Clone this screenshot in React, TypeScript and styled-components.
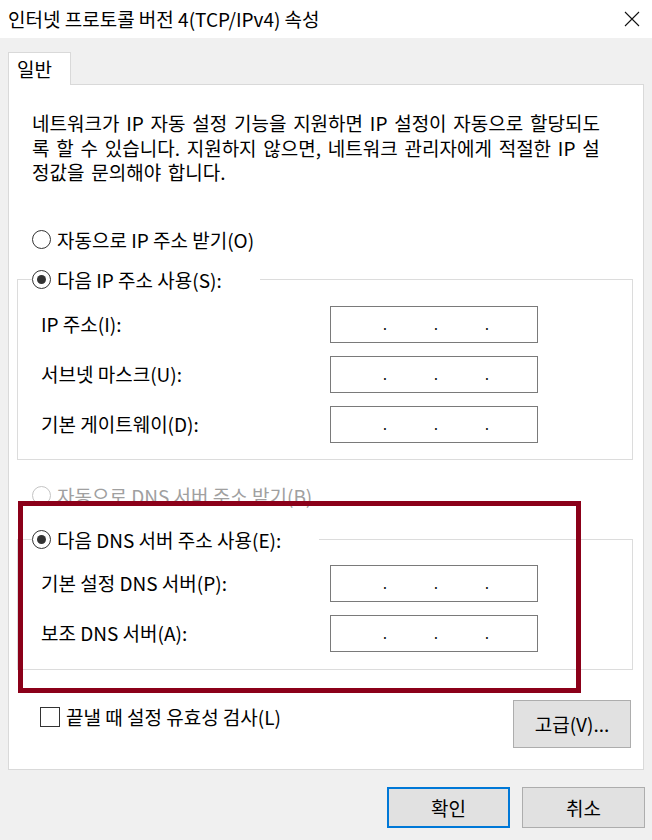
import styled, { createGlobalStyle } from "styled-components";

const GlobalStyle = createGlobalStyle`
  html, body {
    margin: 0;
    padding: 0;
    background: #f0f0f0;
  }
  body {
    font-family: "Noto Sans CJK KR", "Noto Sans", sans-serif;
    color: #000;
  }
`;

const Window = styled.div`
  width: 652px;
  height: 840px;
  background: #f0f0f0;
  display: flex;
  flex-direction: column;
  overflow: hidden;
  font-size: 19px;
`;

const TitleBar = styled.div`
  height: 38px;
  flex-shrink: 0;
  background: #fff;
  display: flex;
  align-items: center;
  justify-content: space-between;
  padding: 0 12px 0 8px;
  box-sizing: border-box;
`;

const Title = styled.span`
  font-size: 19px;
  line-height: 24px;
`;

const Body = styled.div`
  padding: 14px 8px 0 8px;
`;

const TabStrip = styled.div`
  display: flex;
`;

const Tab = styled.div`
  position: relative;
  z-index: 1;
  width: 63px;
  height: 33px;
  box-sizing: border-box;
  margin-bottom: -1px;
  padding: 4px 0 0 8px;
  background: #fff;
  border: 1px solid #d9d9d9;
  border-bottom: none;
  line-height: 24px;
`;

const Panel = styled.div`
  position: relative;
  background: #fff;
  border: 1px solid #d9d9d9;
  padding: 26px 0 21px 0;
`;

const Intro = styled.p`
  margin: 0 0 0 23px;
  line-height: 24.5px;
  word-spacing: 2.5px;
  white-space: nowrap;
`;

const OptionRow = styled.label<{ $disabled?: boolean }>`
  display: flex;
  align-items: center;
  gap: 6px;
  height: 24px;
  line-height: 24px;
  color: ${(p) => (p.$disabled ? "#a0a0a0" : "#000")};
`;

const TopOption = styled(OptionRow)`
  margin: 43px 0 0 23px;
`;

const DnsAutoOption = styled(OptionRow)`
  margin: 24px 0 20px 23px;
`;

const RadioMark = styled.span<{ $checked?: boolean; $disabled?: boolean }>`
  position: relative;
  width: 19px;
  height: 19px;
  box-sizing: border-box;
  border-radius: 50%;
  border: 1px solid ${(p) => (p.$disabled ? "#c4c4c4" : "#333")};
  background: #fff;
  flex-shrink: 0;

  &::after {
    content: "";
    display: ${(p) => (p.$checked ? "block" : "none")};
    position: absolute;
    left: 4px;
    top: 4px;
    width: 9px;
    height: 9px;
    border-radius: 50%;
    background: #333;
  }
`;

const Group = styled.fieldset<{ $gap: number }>`
  margin: ${(p) => p.$gap}px 10px 0 8px;
  padding: 0;
  min-width: 0;
  border: 1px solid #dcdcdc;
`;

const GroupLegend = styled.legend`
  margin-left: 14px;
  padding: 0 38px 0 0;
`;

const FieldGrid = styled.div<{ $top: number; $bottom: number }>`
  display: grid;
  grid-template-columns: 289px 208px;
  row-gap: 13px;
  align-items: center;
  padding: ${(p) => p.$top}px 0 ${(p) => p.$bottom}px 23px;
`;

const FieldLabel = styled.span`
  line-height: 24px;
`;

const IpBox = styled.div`
  height: 37px;
  box-sizing: border-box;
  border: 1px solid #7a7a7a;
  background: #fff;
  display: flex;
  align-items: center;
  padding: 0 0 0 3px;
`;

const Octet = styled.span`
  width: 49px;
`;

const Dot = styled.span`
  width: 2px;
  font-size: 14px;
  line-height: 14px;
  text-align: center;
`;

const BottomRow = styled.div`
  display: flex;
  justify-content: space-between;
  align-items: flex-start;
  margin-top: 30px;
  padding: 0 12px 0 31px;
`;

const CheckLabel = styled.label`
  display: flex;
  align-items: center;
  gap: 6px;
  margin-top: 5px;
  line-height: 24px;
`;

const CheckBox = styled.span`
  width: 20px;
  height: 20px;
  box-sizing: border-box;
  border: 1px solid #333;
  background: #fff;
`;

const Button = styled.button<{ $primary?: boolean }>`
  font: inherit;
  color: #000;
  background: #e1e1e1;
  border: ${(p) => (p.$primary ? "2px solid #0078d7" : "1px solid #adadad")};
  padding: 0;
  margin: 0;
  cursor: default;
`;

const AdvancedButton = styled(Button)`
  width: 118px;
  height: 48px;
`;

const Footer = styled.div`
  display: flex;
  justify-content: flex-end;
  gap: 12px;
  padding-top: 17px;
  margin-right: -1px;
`;

const DialogButton = styled(Button)`
  width: 123px;
  height: 41px;
`;

const Highlight = styled.div`
  position: absolute;
  left: 9px;
  top: 416px;
  width: 563px;
  height: 192px;
  box-sizing: border-box;
  border: 5px solid #8b0019;
  pointer-events: none;
`;

function IpField() {
  return (
    <IpBox>
      <Octet />
      <Dot>.</Dot>
      <Octet />
      <Dot>.</Dot>
      <Octet />
      <Dot>.</Dot>
      <Octet />
    </IpBox>
  );
}

function Radio({
  checked,
  disabled,
  children,
}: {
  checked?: boolean;
  disabled?: boolean;
  children: React.ReactNode;
}) {
  return (
    <>
      <RadioMark $checked={checked} $disabled={disabled} />
      <span>{children}</span>
    </>
  );
}

export default function App() {
  return (
    <Window>
      <GlobalStyle />
      <TitleBar>
        <Title>인터넷 프로토콜 버전 4(TCP/IPv4) 속성</Title>
        <svg width="16" height="16" viewBox="0 0 16 16">
          <path d="M1 1 L15 15 M15 1 L1 15" stroke="#111" strokeWidth="1.1" fill="none" />
        </svg>
      </TitleBar>
      <Body>
        <TabStrip>
          <Tab>일반</Tab>
        </TabStrip>
        <Panel>
          <Intro>
            네트워크가 IP 자동 설정 기능을 지원하면 IP 설정이 자동으로 할당되도
            <br />록 할 수 있습니다. 지원하지 않으면, 네트워크 관리자에게 적절한 IP 설
            <br />
            정값을 문의해야 합니다.
          </Intro>
          <TopOption>
            <Radio>자동으로 IP 주소 받기(O)</Radio>
          </TopOption>
          <Group $gap={16}>
            <GroupLegend>
              <OptionRow>
                <Radio checked>다음 IP 주소 사용(S):</Radio>
              </OptionRow>
            </GroupLegend>
            <FieldGrid $top={14} $bottom={16}>
              <FieldLabel>IP 주소(I):</FieldLabel>
              <IpField />
              <FieldLabel>서브넷 마스크(U):</FieldLabel>
              <IpField />
              <FieldLabel>기본 게이트웨이(D):</FieldLabel>
              <IpField />
            </FieldGrid>
          </Group>
          <DnsAutoOption $disabled>
            <Radio disabled>자동으로 DNS 서버 주소 받기(B)</Radio>
          </DnsAutoOption>
          <Group $gap={0}>
            <GroupLegend>
              <OptionRow>
                <Radio checked>다음 DNS 서버 주소 사용(E):</Radio>
              </OptionRow>
            </GroupLegend>
            <FieldGrid $top={13} $bottom={17}>
              <FieldLabel>기본 설정 DNS 서버(P):</FieldLabel>
              <IpField />
              <FieldLabel>보조 DNS 서버(A):</FieldLabel>
              <IpField />
            </FieldGrid>
          </Group>
          <BottomRow>
            <CheckLabel>
              <CheckBox />
              <span>끝낼 때 설정 유효성 검사(L)</span>
            </CheckLabel>
            <AdvancedButton>고급(V)...</AdvancedButton>
          </BottomRow>
          <Highlight />
        </Panel>
        <Footer>
          <DialogButton $primary>확인</DialogButton>
          <DialogButton>취소</DialogButton>
        </Footer>
      </Body>
    </Window>
  );
}
